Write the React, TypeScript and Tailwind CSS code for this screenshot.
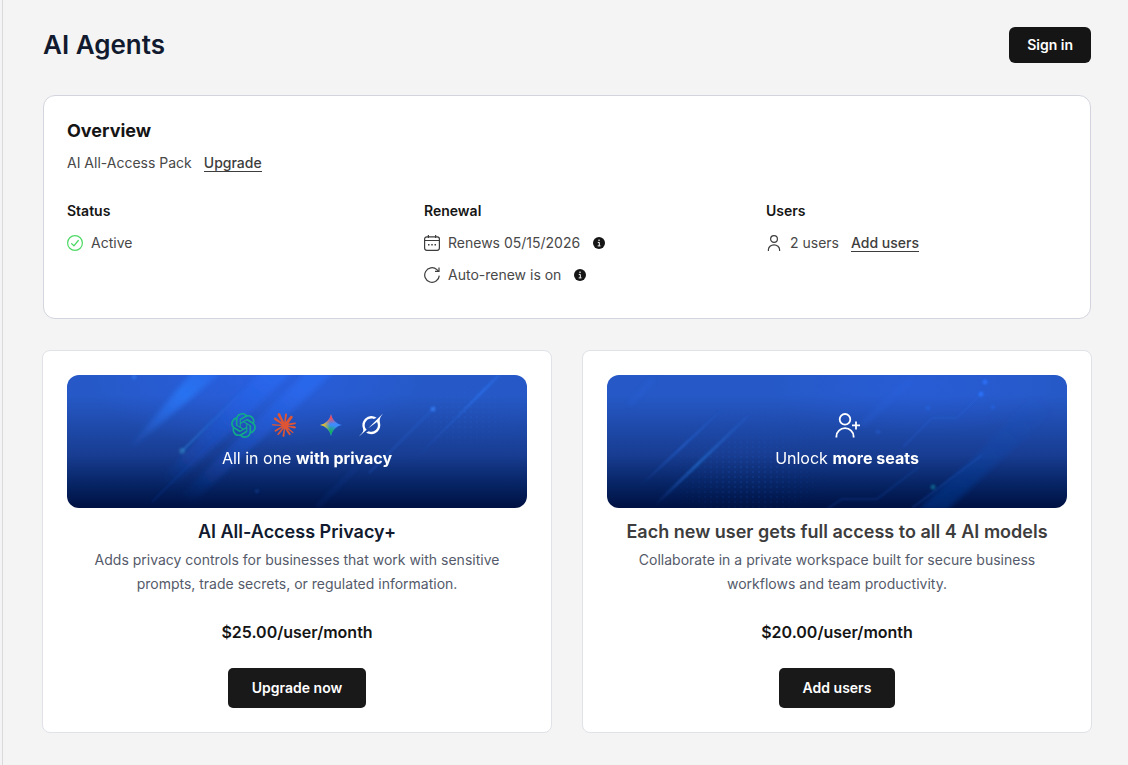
import type { ReactNode } from "react";
import { SiClaude, SiOpenai } from "react-icons/si";

const FONT = "font-['Inter','Liberation_Sans',sans-serif]";

function CheckCircleIcon() {
  return (
    <svg width="16" height="16" viewBox="0 0 16 16" fill="none" stroke="#4cd964" strokeWidth="1.2" aria-hidden="true">
      <circle cx="8" cy="8" r="7.4" />
      <path d="M4.6 8.6l2.3 2.2 4.4-5.3" strokeLinecap="round" strokeLinejoin="round" strokeWidth="1.3" />
    </svg>
  );
}

function CalendarIcon() {
  return (
    <svg width="16" height="16" viewBox="0 0 16 16" fill="none" stroke="#3d3d3d" strokeWidth="1.2" aria-hidden="true">
      <rect x="0.6" y="1.8" width="14.8" height="13.5" rx="2.2" />
      <path d="M.6 5.500h14.800M4.400 0v3M11.600 0v3" />
      <path d="M4 9.800h1.500M7.250 9.800h1.500M10.500 9.800h1.500" strokeWidth="1.6" />
    </svg>
  );
}

function RenewIcon() {
  return (
    <svg width="16" height="16" viewBox="0 0 16 16" fill="none" stroke="#3d3d3d" strokeWidth="1.2" aria-hidden="true">
      <path d="M15.300 8.600A7.300 7.300 0 1 1 12.900 2.600l1.700 1.700" />
      <path d="M15 .4v4h-4" />
    </svg>
  );
}

function InfoIcon() {
  return (
    <svg width="12" height="12" viewBox="0 0 12 12" aria-hidden="true">
      <circle cx="6" cy="6" r="6" fill="#151515" />
      <path d="M4.800 5.400h1.500v3.400M4.700 8.900h2.800" stroke="#fff" strokeWidth="1" fill="none" />
      <rect x="5.4" y="2.6" width="1.3" height="1.3" fill="#fff" />
    </svg>
  );
}

function UserIcon() {
  return (
    <svg width="16" height="16" viewBox="0 0 16 16" fill="none" stroke="#3d3d3d" strokeWidth="1.2" aria-hidden="true">
      <circle cx="8" cy="4" r="3.4" />
      <path d="M2.400 16v-1.200a5.600 5 0 0 1 11.200 0V16" />
    </svg>
  );
}

function AddUserIcon() {
  return (
    <svg width="25" height="25" viewBox="0 0 25 25" fill="none" stroke="#fff" strokeWidth="1.8" aria-hidden="true">
      <circle cx="10" cy="6.3" r="5.3" />
      <path d="M1.400 24.600v-1.200a8.600 8.200 0 0 1 17.200 0v1.200" />
      <path d="M21 8.400v8M17 12.400h8" />
    </svg>
  );
}

function GeminiIcon() {
  return (
    <svg width="24" height="24" viewBox="0 0 24 24" aria-hidden="true">
      <defs>
        <path id="spark" d="M12 1c.9 5.500 5.500 10.100 11 11-5.500.9-10.100 5.500-11 11-.9-5.500-5.500-10.100-11-11 5.500-.9 10.100-5.500 11-11z" />
        <linearGradient id="spark-red" x1="12" y1="1" x2="13" y2="11" gradientUnits="userSpaceOnUse">
          <stop offset="0.4" stopColor="#ee4d5d" />
          <stop offset="1" stopColor="#ee4d5d" stopOpacity="0" />
        </linearGradient>
        <linearGradient id="spark-yellow" x1="1" y1="12" x2="11" y2="12" gradientUnits="userSpaceOnUse">
          <stop offset="0.3" stopColor="#f5c21b" />
          <stop offset="1" stopColor="#f5c21b" stopOpacity="0" />
        </linearGradient>
        <linearGradient id="spark-green" x1="11" y1="23" x2="13" y2="12" gradientUnits="userSpaceOnUse">
          <stop offset="0.4" stopColor="#12b05b" />
          <stop offset="1" stopColor="#12b05b" stopOpacity="0" />
        </linearGradient>
      </defs>
      <use href="#spark" fill="#3d8bff" />
      <use href="#spark" fill="url(#spark-green)" />
      <use href="#spark" fill="url(#spark-red)" />
      <use href="#spark" fill="url(#spark-yellow)" />
    </svg>
  );
}

function GrokIcon() {
  return (
    <svg width="24" height="24" viewBox="0 0 24 24" fill="#fff" aria-hidden="true">
      <path d="M9.27 15.29l7.978-5.897c.391-.29.95-.177 1.137.272.98 2.369.542 5.215-1.41 7.169-1.951 1.954-4.667 2.382-7.149 1.406l-2.711 1.257c3.889 2.661 8.611 2.003 11.562-.953 2.341-2.344 3.066-5.539 2.388-8.42l.006.007c-.983-4.232.242-5.924 2.75-9.383.06-.082.12-.164.179-.248l-3.301 3.305v-.01L9.267 15.292M7.623 16.723c-2.792-2.670-2.310-6.801.071-9.184 1.761-1.763 4.647-2.483 7.166-1.425l2.705-1.250a7.808 7.808 0 00-1.829-1A8.975 8.975 0 005.984 5.830c-2.533 2.536-3.330 6.436-1.962 9.764 1.022 2.487-.653 4.246-2.340 6.022-.599.630-1.199 1.259-1.682 1.925l7.620-6.815" />
    </svg>
  );
}

function PrivacyArt() {
  return (
    <svg className="absolute inset-0 h-full w-full" viewBox="0 0 460 133" preserveAspectRatio="none" aria-hidden="true">
      <defs>
        <linearGradient id="p-beam" x1="145" y1="0" x2="65" y2="80" gradientUnits="userSpaceOnUse">
          <stop offset="0" stopColor="#2a70f2" stopOpacity="0.7" />
          <stop offset="0.3" stopColor="#2878f8" stopOpacity="0.8" />
          <stop offset="1" stopColor="#2a73f5" stopOpacity="0" />
        </linearGradient>
        <linearGradient id="p-wide" x1="225" y1="0" x2="115" y2="125" gradientUnits="userSpaceOnUse">
          <stop offset="0" stopColor="#2a70fa" stopOpacity="0.6" />
          <stop offset="0.6" stopColor="#1d5ae0" stopOpacity="0.35" />
          <stop offset="1" stopColor="#1d5ae0" stopOpacity="0" />
        </linearGradient>
        <linearGradient id="p-line" x1="180" y1="12" x2="114" y2="77" gradientUnits="userSpaceOnUse">
          <stop offset="0" stopColor="#3380ff" stopOpacity="0" />
          <stop offset="1" stopColor="#2a80d8" stopOpacity="0.6" />
        </linearGradient>
        <linearGradient id="p-right" x1="432" y1="0" x2="345" y2="85" gradientUnits="userSpaceOnUse">
          <stop offset="0" stopColor="#2f7cff" stopOpacity="0.3" />
          <stop offset="0.2" stopColor="#2f7cff" stopOpacity="0.65" />
          <stop offset="0.5" stopColor="#2f7cff" stopOpacity="0.2" />
          <stop offset="1" stopColor="#2f7cff" stopOpacity="0" />
        </linearGradient>
        <radialGradient id="p-glow">
          <stop offset="0" stopColor="#2b62f0" stopOpacity="0.6" />
          <stop offset="1" stopColor="#2b62f0" stopOpacity="0" />
        </radialGradient>
        <pattern id="p-dots" width="6" height="5" patternUnits="userSpaceOnUse">
          <circle cx="2" cy="2" r="1.1" fill="#2a66dd" fillOpacity="0.25" />
        </pattern>
        <radialGradient id="p-fade">
          <stop offset="0" stopColor="#fff" />
          <stop offset="1" stopColor="#fff" stopOpacity="0" />
        </radialGradient>
        <mask id="p-mask">
          <ellipse cx="395" cy="36" rx="65" ry="40" fill="url(#p-fade)" />
        </mask>
        <filter id="p-soft" x="-20%" y="-20%" width="140%" height="140%">
          <feGaussianBlur stdDeviation="2.500" />
        </filter>
        <filter id="p-fine" x="-50%" y="-50%" width="200%" height="200%">
          <feGaussianBlur stdDeviation="0.900" />
        </filter>
      </defs>
      <ellipse cx="190" cy="0" rx="170" ry="75" fill="url(#p-glow)" />
      <g filter="url(#p-soft)">
        <path d="M126 -4H156L52 84z" fill="url(#p-beam)" />
        <path d="M194 -4H226L84 133H66z" fill="url(#p-wide)" />
        <path d="M240 -4H268L120 133H100z" fill="url(#p-wide)" opacity="0.9" />
      </g>
      <path d="M180 12L115 76" stroke="url(#p-line)" strokeWidth="2" filter="url(#p-fine)" />
      <circle cx="115" cy="76" r="3" fill="#3d9ad0" opacity="0.4" filter="url(#p-fine)" />
      <path d="M152 60L85 127" stroke="#1d55cf" strokeWidth="1.500" opacity="0.25" filter="url(#p-fine)" />
      <path d="M290 92L250 132" stroke="#2364e0" strokeWidth="2" opacity="0.25" filter="url(#p-soft)" />
      <rect width="460" height="133" fill="url(#p-dots)" mask="url(#p-mask)" />
      <path d="M432 0L345 87" stroke="url(#p-right)" strokeWidth="2" filter="url(#p-fine)" />
      <path d="M366 34L302 98" stroke="#2a6ee8" strokeWidth="2" opacity="0.25" filter="url(#p-fine)" />
      <g fill="#3b87ff" filter="url(#p-fine)">
        <circle cx="366" cy="34" r="2.500" opacity="0.65" />
        <circle cx="67" cy="2" r="2.500" opacity="0.4" />
        <circle cx="190" cy="116" r="2" opacity="0.2" />
      </g>
    </svg>
  );
}

function SeatsArt() {
  return (
    <svg className="absolute inset-0 h-full w-full" viewBox="0 0 460 133" preserveAspectRatio="none" aria-hidden="true">
      <defs>
        <linearGradient id="s-one" x1="118" y1="32" x2="34" y2="110" gradientUnits="userSpaceOnUse">
          <stop offset="0" stopColor="#2a6ee8" stopOpacity="0" />
          <stop offset="0.5" stopColor="#2a6ee8" stopOpacity="0.55" />
          <stop offset="1" stopColor="#2a6ee8" stopOpacity="0" />
        </linearGradient>
        <linearGradient id="s-two" x1="142" y1="40" x2="48" y2="130" gradientUnits="userSpaceOnUse">
          <stop offset="0" stopColor="#2a6ee8" stopOpacity="0.1" />
          <stop offset="0.55" stopColor="#2275d8" stopOpacity="0.65" />
          <stop offset="1" stopColor="#2a6ee8" stopOpacity="0" />
        </linearGradient>
        <linearGradient id="s-beam" x1="430" y1="15" x2="320" y2="130" gradientUnits="userSpaceOnUse">
          <stop offset="0" stopColor="#1d5be0" stopOpacity="0" />
          <stop offset="1" stopColor="#1058d0" stopOpacity="0.3" />
        </linearGradient>
        <radialGradient id="s-glow">
          <stop offset="0" stopColor="#2b62f0" stopOpacity="0.35" />
          <stop offset="1" stopColor="#2b62f0" stopOpacity="0" />
        </radialGradient>
        <pattern id="s-dots" width="6" height="5" patternUnits="userSpaceOnUse">
          <circle cx="2" cy="2" r="1.200" fill="#1c57c8" fillOpacity="0.25" />
        </pattern>
        <radialGradient id="s-fade">
          <stop offset="0" stopColor="#fff" />
          <stop offset="1" stopColor="#fff" stopOpacity="0" />
        </radialGradient>
        <mask id="s-mask">
          <ellipse cx="140" cy="92" rx="90" ry="60" fill="url(#s-fade)" />
        </mask>
        <filter id="s-soft" x="-20%" y="-20%" width="140%" height="140%">
          <feGaussianBlur stdDeviation="2.500" />
        </filter>
        <filter id="s-fine" x="-50%" y="-50%" width="200%" height="200%">
          <feGaussianBlur stdDeviation="0.900" />
        </filter>
      </defs>
      <ellipse cx="310" cy="10" rx="150" ry="50" fill="url(#s-glow)" />
      <rect width="460" height="133" fill="url(#s-dots)" mask="url(#s-mask)" />
      <path d="M118 32L34 110" stroke="url(#s-one)" strokeWidth="2" filter="url(#s-fine)" />
      <path d="M142 40L48 130" stroke="url(#s-two)" strokeWidth="3" filter="url(#s-fine)" />
      <path d="M47 4L22 30" stroke="#2c68e6" strokeWidth="3" opacity="0.4" filter="url(#s-soft)" />
      <path d="M430 15L370 80 310 135H340L465 20z" fill="url(#s-beam)" filter="url(#s-soft)" />
      <g fill="none" stroke="#2467dd" strokeWidth="1.500" filter="url(#s-fine)">
        <path d="M374 19L350 43H325L296 72" opacity="0.3" />
        <path d="M312 92L270 124H235L220 134" opacity="0.25" />
        <path d="M375 80L305 133" opacity="0.35" />
      </g>
      <path d="M305 4L255 50" stroke="#2c68e6" strokeWidth="5" opacity="0.25" filter="url(#s-soft)" />
      <g fill="#2a74ff" filter="url(#s-fine)">
        <circle cx="378" cy="7" r="2.500" opacity="0.8" />
        <circle cx="374" cy="19" r="2.500" opacity="0.9" />
        <circle cx="386" cy="32" r="2" opacity="0.4" />
        <circle cx="321" cy="33" r="2" opacity="0.4" />
        <circle cx="271" cy="57" r="2" opacity="0.3" />
      </g>
      <circle cx="326" cy="112" r="2.500" fill="#1499b0" opacity="0.5" filter="url(#s-fine)" />
    </svg>
  );
}

function Banner({ art, icons, children }: { art: ReactNode; icons: ReactNode; children: ReactNode }) {
  return (
    <div className="relative h-[133px] overflow-hidden rounded-xl bg-linear-to-b from-[#2659c7] from-15% via-[#183d92] via-60% to-[#001142]">
      {art}
      <div className="relative flex flex-col items-center pt-[38px] pl-5 text-white">
        <div className="flex h-6 items-center">{icons}</div>
        <p className="mt-[9px] text-base leading-6">{children}</p>
      </div>
    </div>
  );
}

function OfferCard(props: {
  banner: ReactNode;
  title: string;
  titleClass: string;
  text: string;
  price: string;
  action: string;
}) {
  return (
    <section className="flex flex-col items-center rounded-lg border border-[#dfe2e7] bg-white p-6 text-center">
      <div className="self-stretch">{props.banner}</div>
      <h2 className={`mt-3 text-lg leading-6 font-semibold ${props.titleClass}`}>{props.title}</h2>
      <p className="mt-1 max-w-[412px] text-sm leading-6 text-[#545a6a]">{props.text}</p>
      <p className="mt-6 text-base leading-6 font-semibold text-[#151515]">{props.price}</p>
      <button type="button" className="mt-6 h-10 rounded-[5px] bg-[#191919] px-6 text-sm font-semibold text-white">
        {props.action}
      </button>
    </section>
  );
}

function Info({ label }: { label: string }) {
  return (
    <button type="button" aria-label={label} className="ml-[13px]">
      <InfoIcon />
    </button>
  );
}

const LINK = "border-b border-[#3d3d3d] leading-4 font-medium text-[#3d3d3d]";

export default function App() {
  return (
    <div className={`min-h-screen bg-[#f4f4f4] pl-0.5 ${FONT}`}>
      <main className="min-h-screen border-l border-[#d9d9de] pt-[27px] pr-9 pb-8 pl-[39px]">
        <header className="mx-px flex items-center justify-between">
          <h1 className="text-[26px] leading-9 font-semibold text-[#111a2e]">AI Agents</h1>
          <button type="button" className="h-9 rounded-md bg-[#151515] px-[18px] text-sm font-semibold text-white">
            Sign in
          </button>
        </header>

        <section className="mx-px mt-8 rounded-xl border border-[#d3d5de] bg-white px-[23px] pt-[23px] pb-[31px]">
          <h2 className="text-lg leading-6 font-bold text-[#151515]">Overview</h2>
          <p className="mt-2 flex h-6 items-center text-sm text-[#484848]">
            AI All-Access Pack
            <a href="#upgrade" className={`ml-3 ${LINK}`}>
              Upgrade
            </a>
          </p>
          <div className="mt-6 grid grid-cols-[357fr_342fr_301fr] text-sm text-[#484848]">
            <div>
              <h3 className="leading-6 font-semibold text-[#151515]">Status</h3>
              <p className="mt-2 flex h-6 items-center gap-2">
                <CheckCircleIcon />
                Active
              </p>
            </div>
            <div>
              <h3 className="leading-6 font-semibold text-[#151515]">Renewal</h3>
              <div className="mt-2 flex h-6 items-center">
                <CalendarIcon />
                <span className="ml-2">Renews 05/15/2026</span>
                <Info label="About the renewal date" />
              </div>
              <div className="mt-2 flex h-6 items-center">
                <RenewIcon />
                <span className="ml-2">Auto-renew is on</span>
                <Info label="About auto-renew" />
              </div>
            </div>
            <div>
              <h3 className="leading-6 font-semibold text-[#151515]">Users</h3>
              <p className="mt-2 flex h-6 items-center">
                <UserIcon />
                <span className="ml-2">2 users</span>
                <a href="#add-users" className={`ml-3 ${LINK}`}>
                  Add users
                </a>
              </p>
            </div>
          </div>
        </section>

        <div className="mt-[31px] grid grid-cols-2 gap-[30px]">
          <OfferCard
            banner={
              <Banner
                art={<PrivacyArt />}
                icons={
                  <>
                    <SiOpenai size={25} color="#12a98b" />
                    <SiClaude size={24} color="#dd5535" className="ml-4" />
                    <span className="ml-[23px]">
                      <GeminiIcon />
                    </span>
                    <span className="ml-4">
                      <GrokIcon />
                    </span>
                  </>
                }
              >
                All in one <strong className="font-bold">with privacy</strong>
              </Banner>
            }
            title="AI All-Access Privacy+"
            titleClass="text-[#111a2e]"
            text="Adds privacy controls for businesses that work with sensitive prompts, trade secrets, or regulated information."
            price="$25.00/user/month"
            action="Upgrade now"
          />
          <OfferCard
            banner={
              <Banner art={<SeatsArt />} icons={<AddUserIcon />}>
                Unlock <strong className="font-bold">more seats</strong>
              </Banner>
            }
            title="Each new user gets full access to all 4 AI models"
            titleClass="text-[#3d3d3d]"
            text="Collaborate in a private workspace built for secure business workflows and team productivity."
            price="$20.00/user/month"
            action="Add users"
          />
        </div>
      </main>
    </div>
  );
}
